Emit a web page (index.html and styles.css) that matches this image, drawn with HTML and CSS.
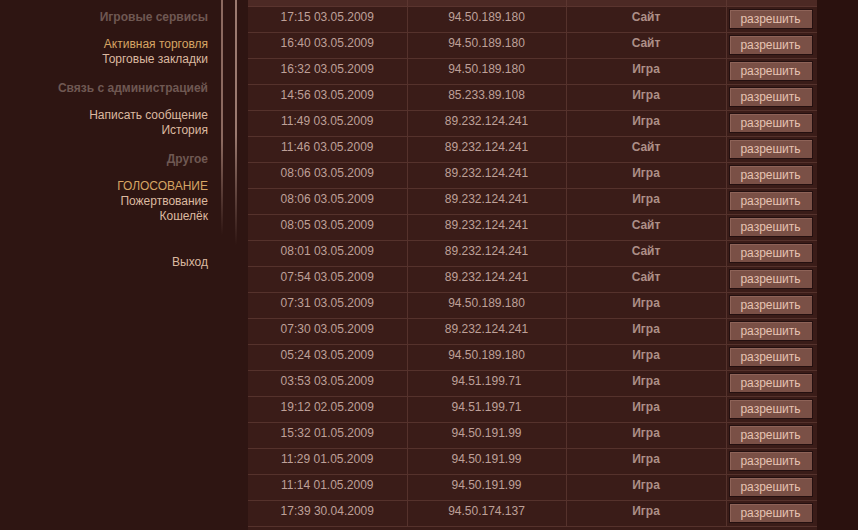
FILE: index.html
```html
<!DOCTYPE html>
<html>
<head>
  <meta charset="UTF-8">
  <title>Доступ к аккаунту</title>
  <link rel="stylesheet" href="styles.css">
</head>
<body>
  <div class="page">
    <aside class="sidebar">
      <nav class="menu">
        <div class="menu-group">
          <div class="menu-title">Игровые сервисы</div>
          <a class="menu-link active" href="#">Активная торговля</a>
          <a class="menu-link" href="#">Торговые закладки</a>
        </div>
        <div class="menu-group">
          <div class="menu-title">Связь с администрацией</div>
          <a class="menu-link" href="#">Написать сообщение</a>
          <a class="menu-link" href="#">История</a>
        </div>
        <div class="menu-group">
          <div class="menu-title">Другое</div>
          <a class="menu-link active" href="#">ГОЛОСОВАНИЕ</a>
          <a class="menu-link" href="#">Пожертвование</a>
          <a class="menu-link" href="#">Кошелёк</a>
        </div>
        <div class="menu-group exit">
          <a class="menu-link" href="#">Выход</a>
        </div>
      </nav>
      <div class="rail">
        <span class="rail-line first"></span>
        <span class="rail-line second"></span>
      </div>
    </aside>

    <main class="content">
      <table class="log">
        <colgroup>
          <col class="col-time">
          <col class="col-ip">
          <col class="col-type">
          <col class="col-action">
        </colgroup>
        <thead>
          <tr><th></th><th></th><th></th><th></th></tr>
        </thead>
        <tbody id="log-body"></tbody>
      </table>
    </main>
  </div>

  <script>
    // login log: time, ip, where
    const rows = [
      ['17:15 03.05.2009', '94.50.189.180', 'Сайт'],
      ['16:40 03.05.2009', '94.50.189.180', 'Сайт'],
      ['16:32 03.05.2009', '94.50.189.180', 'Игра'],
      ['14:56 03.05.2009', '85.233.89.108', 'Игра'],
      ['11:49 03.05.2009', '89.232.124.241', 'Игра'],
      ['11:46 03.05.2009', '89.232.124.241', 'Сайт'],
      ['08:06 03.05.2009', '89.232.124.241', 'Игра'],
      ['08:06 03.05.2009', '89.232.124.241', 'Игра'],
      ['08:05 03.05.2009', '89.232.124.241', 'Сайт'],
      ['08:01 03.05.2009', '89.232.124.241', 'Сайт'],
      ['07:54 03.05.2009', '89.232.124.241', 'Сайт'],
      ['07:31 03.05.2009', '94.50.189.180', 'Игра'],
      ['07:30 03.05.2009', '89.232.124.241', 'Игра'],
      ['05:24 03.05.2009', '94.50.189.180', 'Игра'],
      ['03:53 03.05.2009', '94.51.199.71', 'Игра'],
      ['19:12 02.05.2009', '94.51.199.71', 'Игра'],
      ['15:32 01.05.2009', '94.50.191.99', 'Игра'],
      ['11:29 01.05.2009', '94.50.191.99', 'Игра'],
      ['11:14 01.05.2009', '94.50.191.99', 'Игра'],
      ['17:39 30.04.2009', '94.50.174.137', 'Игра']
    ];

    const body = document.getElementById('log-body');
    body.innerHTML = rows.map(r => `
      <tr>
        <td class="cell-time">${r[0]}</td>
        <td class="cell-ip">${r[1]}</td>
        <td class="cell-type">${r[2]}</td>
        <td class="cell-action"><button class="allow-btn">разрешить</button></td>
      </tr>
    `).join('');
  </script>
</body>
</html>
```

FILE: styles.css
```css
:root {
  --bg: #2e1512;
  --bg-right: #2a110e;
  --table-bg: #3a1c18;
  --grid: #55322c;
  --text: #bea098;
  --type: #ad8f87;
  --menu-title: #6f5852;
  --menu-link: #dcb9a0;
  --menu-active: #d6a564;
}

html, body {
  margin: 0;
  padding: 0;
  height: 100%;
  overflow: hidden;
}

body {
  background-color: var(--bg-right);
  font-family: 'Liberation Sans', Arial, sans-serif;
  font-size: 12px;
}

.page {
  display: flex;
  min-height: 100%;
}

/* left menu */
.sidebar {
  display: flex;
  width: 248px;
  flex-shrink: 0;
  background-color: var(--bg);
}

.menu {
  width: 208px;
  padding-top: 10px;
  text-align: right;
  line-height: 15px;
}

.menu-group {
  margin-bottom: 14px;
}

.menu-group.exit {
  margin-top: 31px;
}

.menu-title {
  font-weight: bold;
  color: var(--menu-title);
  margin-bottom: 12px;
}

.menu-link {
  display: block;
  color: var(--menu-link);
  text-decoration: none;
}

.menu-link.active {
  color: var(--menu-active);
}

.rail {
  display: flex;
  flex: 1;
}

.rail-line {
  display: block;
  width: 2px;
}

.rail-line.first {
  margin-left: 13px;
  height: 235px;
  background: linear-gradient(to bottom, #8c6a60 0%, #8c6a60 60%, rgba(140,106,96,0) 100%);
}

.rail-line.second {
  margin-left: 12px;
  height: 245px;
  background: linear-gradient(to bottom, #9b7a70 0%, #9b7a70 55%, rgba(155,122,112,0) 100%);
}

/* log table */
.content {
  width: 569px;
  flex-shrink: 0;
  background-color: var(--table-bg);
}

.log {
  width: 569px;
  border-collapse: collapse;
  table-layout: fixed;
}

.col-time { width: 159px; }
.col-ip { width: 159px; }
.col-type { width: 160px; }
.col-action { width: 91px; }

.log th {
  height: 6px;
  padding: 0;
  box-sizing: border-box;
  background-color: #4c2924;
  border-left: 1px solid #5c3630;
  border-bottom: 1px solid #5a342e;
}

.log th:first-child {
  border-left: none;
}

.log td {
  height: 26px;
  padding: 3px 0 0;
  box-sizing: border-box;
  border-bottom: 1px solid var(--grid);
  border-left: 1px solid var(--grid);
  text-align: center;
  vertical-align: top;
  line-height: 15px;
  color: var(--text);
}

.log td:first-child {
  border-left: none;
}

.log td.cell-type {
  font-weight: bold;
  color: var(--type);
}

.log td.cell-action {
  padding: 2px 0 0 2px;
  text-align: left;
}

.allow-btn {
  width: 84px;
  height: 20px;
  padding: 0;
  margin: 0;
  background-color: #7a5046;
  border: 1px solid #241010;
  box-shadow: inset 1px 1px 0 #8e6358;
  color: #e6c3b2;
  font-family: 'Liberation Sans', Arial, sans-serif;
  font-size: 12px;
  cursor: pointer;
}
```
